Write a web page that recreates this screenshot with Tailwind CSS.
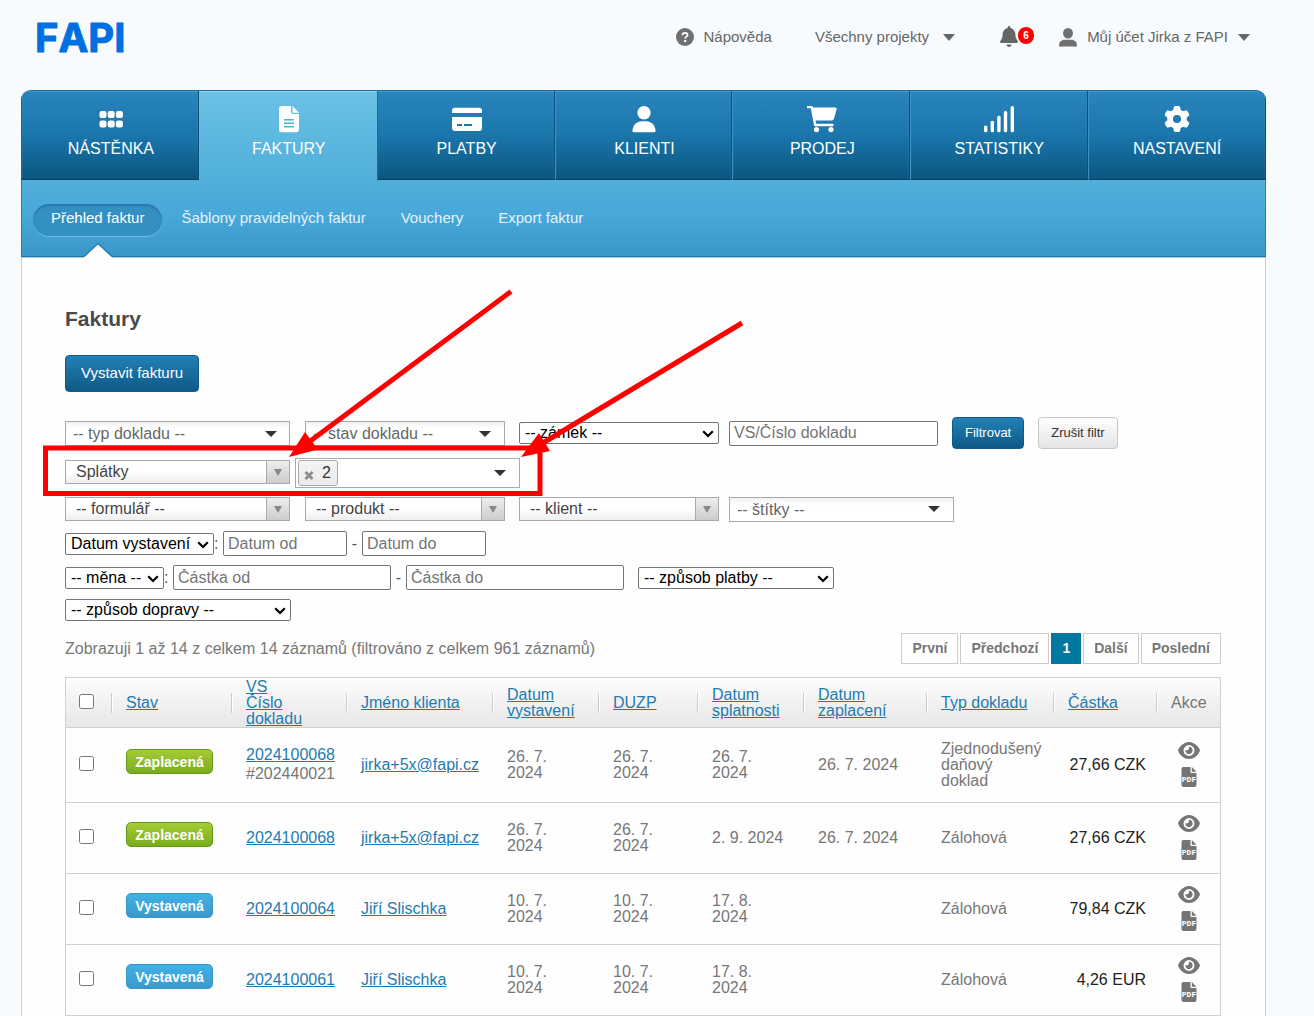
<!DOCTYPE html>
<html lang="cs">
<head>
<meta charset="utf-8">
<meta name="viewport" content="width=device-width, initial-scale=1">
<title>FAPI – Faktury</title>
<script src="https://cdn.jsdelivr.net/npm/@tailwindcss/browser@4"></script>
</head>
<body class="relative bg-[#f8fbfe] font-['Liberation_Sans',Arial,sans-serif] text-base text-[#777]">

<!-- Shared icons -->
<svg class="hidden" aria-hidden="true">
  <symbol id="eye" viewBox="0 32 576 448"><path d="M288 32c-80.800 0-145.500 36.800-192.600 80.600C48.600 156 17.300 208 2.500 243.700c-3.300 7.900-3.300 16.700 0 24.600C17.300 304 48.600 356 95.400 399.400C142.500 443.200 207.200 480 288 480s145.500-36.800 192.600-80.600c46.800-43.500 78.100-95.400 93-131.100c3.300-7.900 3.300-16.700 0-24.600c-14.900-35.700-46.200-87.700-93-131.100C433.500 68.800 368.800 32 288 32zM144 256a144 144 0 1 1 288 0 144 144 0 1 1-288 0zm144-64c0 35.300-28.700 64-64 64c-7.100 0-13.900-1.200-20.300-3.300c-5.500-1.800-11.900 1.600-11.700 7.400c.3 6.900 1.300 13.800 3.200 20.700c13.700 51.200 66.400 81.600 117.600 67.900s81.600-66.400 67.900-117.600c-11.100-41.500-47.800-69.400-88.600-71.100c-5.800-.2-9.200 6.100-7.400 11.700c2.100 6.400 3.300 13.200 3.300 20.300z"/></symbol>
  <symbol id="pdf" viewBox="0 0 16 20"><path d="M2 0H9.500V5a1 1 0 0 0 1 1H15.500V18a2 2 0 0 1-2 2H2.500a2 2 0 0 1-2-2V2a2 2 0 0 1 1.500-2zM10.800 0L15.500 4.700H10.800z"/><text x="8" y="14.500" text-anchor="middle" font-family="Liberation Mono" font-weight="bold" font-size="8" fill="#fff">PDF</text></symbol>
  <symbol id="caret" viewBox="0 0 12 6"><path d="M0 0H12L6 6z"/></symbol>
  <symbol id="dropdown" viewBox="0 0 8 7"><path d="M0 0H8L4 7z"/></symbol>
  <symbol id="chevron" viewBox="0 0 12 8"><path d="M1.200 1.200L6 6L10.800 1.200" fill="none" stroke="#000" stroke-width="2.200"/></symbol>
</svg>

<header class="flex h-[90px] items-start justify-between pl-[35px] pr-16">
  <a href="#" aria-label="FAPI" class="mt-3">
    <svg width="100" height="52" viewBox="0 0 100 52"><text class="[font-kerning:none]" x="0" y="40" font-family="Inter" font-weight="700" font-size="40" fill="#006fe0" stroke="#006fe0" stroke-width="1" stroke-linejoin="round">FAPI</text></svg>
  </a>
  <nav class="mt-[25px] flex h-6 items-center text-[15px] text-[#666]">
    <a href="#" class="flex items-center gap-[10px]">
      <svg width="18" height="18" viewBox="0 0 18 18"><circle cx="9" cy="9" r="9" fill="#707070"/><path d="M6.500 7.200C6.500 5.500 7.600 4.800 9 4.800S11.500 5.700 11.500 7C11.500 8.600 9.200 8.700 9.200 10.500" fill="none" stroke="#fff" stroke-width="1.800"/><circle cx="9.200" cy="13" r="1.200" fill="#fff"/></svg>
      Nápověda</a>
    <button type="button" class="ml-[43px] flex items-center gap-[14px]">Všechny projekty <svg class="mt-px fill-[#666]" width="12" height="7" viewBox="0 0 12 6" preserveAspectRatio="none"><use href="#caret"/></svg></button>
    <button type="button" class="ml-[45px] flex items-start pb-0.5" aria-label="Oznámení">
      <svg class="fill-[#666]" width="18" height="21" viewBox="0 0 448 512" preserveAspectRatio="none"><path d="M224 0c-17.700 0-32 14.300-32 32V51.200C119 66 64 130.600 64 208v18.800c0 47-17.300 92.400-48.500 127.600l-7.400 8.300c-8.400 9.400-10.400 22.900-5.300 34.400S19.400 416 32 416H416c12.600 0 24-7.400 29.200-18.900s3.100-25-5.300-34.400l-7.400-8.300C401.300 319.200 384 273.900 384 226.800V208c0-77.400-55-142-128-156.800V32c0-17.700-14.300-32-32-32zm45.300 493.300c12-12 18.700-28.300 18.700-45.300H224 160c0 17 6.700 33.300 18.700 45.300s28.300 18.700 45.300 18.700s33.300-6.700 45.300-18.700z"/></svg>
      <span class="mt-px flex h-[17px] w-4 items-center justify-center rounded-full bg-[#f00] text-[10px] font-bold text-white">6</span>
    </button>
    <button type="button" class="ml-[25px] flex items-center gap-[10px]">
      <svg class="fill-[#707070]" width="18" height="19" viewBox="0 0 18 19"><ellipse cx="9" cy="5.300" rx="5" ry="5.300"/><path d="M0 17.500C0 14 2.500 11.800 5.500 11.800H12.500C15.500 11.800 18 14 18 17.500V18.500H0z"/></svg>
      Můj účet Jirka z FAPI <svg class="mt-px fill-[#666]" width="12" height="7" viewBox="0 0 12 6" preserveAspectRatio="none"><use href="#caret"/></svg></button>
  </nav>
</header>

<div class="ml-[21px] mr-12">
  <!-- Main navigation -->
  <nav class="grid h-[90px] grid-cols-7 overflow-hidden rounded-t-[10px] border-t border-[#1673a8] bg-[#1a75aa] text-white">
    <a href="#" class="flex flex-col items-center border-b border-l border-r border-b-[#053f5e] border-l-[#146a9c] border-r-[#0b507a] bg-linear-to-b from-[#2985bc] via-[#1b76ac] to-[#0a5680] pl-0.5 pt-[14px] shadow-[inset_0_1px_1px_#4a9bcb]">
      <svg class="fill-white" width="30" height="28" viewBox="0 0 30 28"><rect x="3.500" y="6" width="7" height="7" rx="2"/><rect x="11.700" y="6" width="7" height="7" rx="2"/><rect x="19.900" y="6" width="7" height="7" rx="2"/><rect x="3.500" y="15.500" width="7" height="7" rx="2"/><rect x="11.700" y="15.500" width="7" height="7" rx="2"/><rect x="19.900" y="15.500" width="7" height="7" rx="2"/></svg>
      <span class="mt-1.5 leading-5">NÁSTĚNKA</span></a>
    <a href="#" class="flex flex-col items-center bg-linear-to-b from-[#6bc1e5] to-[#50afda] pl-[3px] pr-px pt-[14px] shadow-[inset_0_1px_1px_#8fd3ef]">
      <svg width="30" height="28" viewBox="0 0 30 28"><path fill="#fff" d="M7.500 1H17V7a2 2 0 0 0 2 2h6V24.500a2.700 2.700 0 0 1-2.700 2.700H7.700A2.700 2.700 0 0 1 5 24.500V3.700A2.700 2.700 0 0 1 7.500 1zM18.500 1L25 7.700H18.500z"/><path d="M10 14.800H20M10 18.300H20M10 21.800H20" stroke="#4fb0da" stroke-width="1.500"/></svg>
      <span class="mt-1.5 leading-5">FAKTURY</span></a>
    <a href="#" class="flex flex-col items-center border-b border-l border-r border-b-[#053f5e] border-l-[#146a9c] border-r-[#0b507a] bg-linear-to-b from-[#2985bc] via-[#1b76ac] to-[#0a5680] pl-0.5 pt-[14px] shadow-[inset_0_1px_1px_#4a9bcb]">
      <svg width="30" height="28" viewBox="0 0 30 28"><path fill="#fff" d="M3 2.700H27a3 3 0 0 1 3 3V8H0V5.700a3 3 0 0 1 3-3zM0 12H30V23a3 3 0 0 1-3 3H3a3 3 0 0 1-3-3z"/><path d="M5 20H10M12 20H20" stroke="#1c77ad" stroke-width="1.800"/></svg>
      <span class="mt-1.5 leading-5">PLATBY</span></a>
    <a href="#" class="flex flex-col items-center border-b border-l border-r border-b-[#053f5e] border-l-[#3f8fc0] border-r-[#0b507a] bg-linear-to-b from-[#2985bc] via-[#1b76ac] to-[#0a5680] pl-0.5 pt-[14px] shadow-[inset_0_1px_1px_#4a9bcb]">
      <svg class="fill-white" width="30" height="28" viewBox="0 0 30 28"><circle cx="15" cy="7.700" r="6.700"/><path d="M3.500 26C3.500 20 8 16.300 13 16.300H17C22 16.300 26.500 20 26.500 26Q26.500 27.200 25.300 27.200H4.700Q3.500 27.200 3.500 26z"/></svg>
      <span class="mt-1.5 leading-5">KLIENTI</span></a>
    <a href="#" class="flex flex-col items-center border-b border-l border-r border-b-[#053f5e] border-l-[#3f8fc0] border-r-[#0b507a] bg-linear-to-b from-[#2985bc] via-[#1b76ac] to-[#0a5680] pl-0.5 pt-[14px] shadow-[inset_0_1px_1px_#4a9bcb]">
      <svg width="30" height="28" viewBox="0 0 30 28"><path d="M1 2.100H4.800L8.200 20H25.500" fill="none" stroke="#fff" stroke-width="2.400" stroke-linecap="round" stroke-linejoin="round"/><path fill="#fff" d="M5.500 2.500H28.500Q30 2.700 29.600 4.300L27 13.700Q26.500 15.500 24.800 15.500H8z"/><circle cx="9.500" cy="24.600" r="2.600" fill="#fff"/><circle cx="24" cy="24.600" r="2.600" fill="#fff"/></svg>
      <span class="mt-1.5 leading-5">PRODEJ</span></a>
    <a href="#" class="flex flex-col items-center border-b border-l border-r border-b-[#053f5e] border-l-[#3f8fc0] border-r-[#0b507a] bg-linear-to-b from-[#2985bc] via-[#1b76ac] to-[#0a5680] pt-[14px] shadow-[inset_0_1px_1px_#4a9bcb]">
      <svg class="fill-white" width="30" height="28" viewBox="0 0 30 28"><rect x="0" y="20.500" width="3.400" height="6.700" rx="1.500"/><rect x="6.600" y="15.800" width="3.400" height="11.400" rx="1.500"/><rect x="13.200" y="10.800" width="3.400" height="16.400" rx="1.500"/><rect x="19.800" y="6" width="3.400" height="21.200" rx="1.500"/><rect x="26.600" y="1" width="3.400" height="26.200" rx="1.500"/></svg>
      <span class="mt-1.5 leading-5">STATISTIKY</span></a>
    <a href="#" class="flex flex-col items-center border-b border-l border-r border-b-[#053f5e] border-l-[#3f8fc0] border-r-[#0b507a] bg-linear-to-b from-[#2985bc] via-[#1b76ac] to-[#0a5680] pt-[14px] shadow-[inset_0_1px_1px_#4a9bcb]">
      <svg class="fill-white" width="26" height="28" viewBox="0 -20 512 552"><path d="M495.900 166.600c3.200 8.700 .5 18.400-6.400 24.600l-43.300 39.400c1.100 8.300 1.700 16.800 1.700 25.400s-.6 17.100-1.700 25.400l43.300 39.400c6.900 6.200 9.600 15.900 6.400 24.600c-4.400 11.900-9.700 23.300-15.800 34.300l-4.700 8.100c-6.600 11-14 21.400-22.100 31.200c-5.900 7.200-15.700 9.600-24.500 6.800l-55.700-17.700c-13.400 10.300-28.200 18.900-44 25.400l-12.500 57.100c-2 9.100-9 16.300-18.200 17.800c-13.800 2.300-28 3.500-42.500 3.500s-28.700-1.200-42.500-3.500c-9.200-1.500-16.200-8.700-18.200-17.800l-12.500-57.100c-15.800-6.500-30.600-15.100-44-25.400L83.100 425.900c-8.800 2.800-18.600 .3-24.500-6.800c-8.100-9.800-15.500-20.200-22.100-31.200l-4.700-8.100c-6.100-11-11.400-22.400-15.800-34.300c-3.200-8.700-.5-18.400 6.400-24.600l43.300-39.400C64.600 273.100 64 264.600 64 256s.6-17.100 1.700-25.400L22.400 191.200c-6.900-6.200-9.600-15.900-6.400-24.600c4.400-11.900 9.700-23.300 15.800-34.300l4.700-8.100c6.600-11 14-21.400 22.100-31.200c5.900-7.200 15.700-9.600 24.500-6.800l55.700 17.700c13.400-10.300 28.200-18.900 44-25.400l12.500-57.100c2-9.100 9-16.300 18.200-17.800C227.300 1.200 241.500 0 256 0s28.700 1.200 42.500 3.500c9.200 1.500 16.200 8.700 18.200 17.800l12.500 57.100c15.800 6.500 30.600 15.100 44 25.400l55.700-17.700c8.800-2.800 18.600-.3 24.500 6.800c8.100 9.800 15.500 20.200 22.100 31.200l4.700 8.100c6.100 11 11.400 22.400 15.800 34.300zM256 336a80 80 0 1 0 0-160 80 80 0 1 0 0 160z"/></svg>
      <span class="mt-1.5 leading-5">NASTAVENÍ</span></a>
  </nav>

  <!-- Section navigation -->
  <nav class="relative h-[77px] border-x border-b border-x-[#2180b5] border-b-[#1f78a9] bg-linear-to-b from-[#50afda] via-[#47a7d9] to-[#3b96ca] px-[11px] pt-6 text-[15px] text-[#e4f3fb]">
    <div class="flex items-center gap-[35px]">
      <a href="#" class="-mr-4 flex h-8 items-center rounded-full bg-[#348fc3] px-[18px] pb-[3px] text-white shadow-[inset_0_2px_2px_#2a79aa,0_1px_0_#72bde3]">Přehled faktur</a>
      <a href="#" class="pb-[3px]">Šablony pravidelných faktur</a>
      <a href="#" class="pb-[3px]">Vouchery</a>
      <a href="#" class="pb-[3px]">Export faktur</a>
    </div>
    <svg class="absolute -bottom-0.5 left-[60px]" width="32" height="16" viewBox="0 0 32 16"><path d="M1 16L16 1.500L31 16z" fill="#fff"/><path d="M2 14.500L16 1.500L30 14.500" fill="none" stroke="#2a7fae" stroke-width="1.500"/></svg>
  </nav>

  <main class="border-x border-t border-[#ccc] border-t-[#a9c8d9] bg-[#fefefe] pl-[43px] pr-11 pt-[49px]">
    <h1 class="text-[21px] font-bold leading-6 text-[#4a4a4a]">Faktury</h1>
    <button type="button" class="mt-6 block h-[37px] rounded-[4px] border border-[#0d5d8c] bg-linear-to-b from-[#2480b6] to-[#0d5a86] px-[15px] text-[15px] text-white">Vystavit fakturu</button>

    <form class="mt-[25px] flex flex-col gap-[9px] text-[#555]">
      <div class="flex h-8 items-center">
        <div class="relative w-[225px]">
          <select aria-label="Typ dokladu" class="block h-[25px] w-full appearance-none border border-[#aaa] bg-white bg-linear-to-b from-[#f2f2f2] to-white to-30% pl-[7px] text-[#666]"><option>-- typ dokladu --</option></select>
          <svg class="pointer-events-none absolute right-[13px] top-[10px] fill-[#333]" width="12" height="6"><use href="#caret"/></svg>
        </div>
        <div class="relative ml-[15px] w-[200px]">
          <select aria-label="Stav dokladu" class="block h-[25px] w-full appearance-none border border-[#aaa] bg-white bg-linear-to-b from-[#f2f2f2] to-white to-30% pl-[7px] text-[#666]"><option>-- stav dokladu --</option></select>
          <svg class="pointer-events-none absolute right-[14px] top-[10px] fill-[#333]" width="12" height="6"><use href="#caret"/></svg>
        </div>
        <div class="relative ml-[14px] w-[200px]">
          <select aria-label="Zámek" class="block h-[22px] w-full appearance-none rounded-[2px] border border-[#767676] bg-white pl-[5px] leading-5 text-black"><option>-- zámek --</option></select>
          <svg class="pointer-events-none absolute right-[5px] top-2" width="12" height="8"><use href="#chevron"/></svg>
        </div>
        <input type="text" aria-label="VS/Číslo dokladu" placeholder="VS/Číslo dokladu" class="ml-[10px] h-[25px] w-[209px] rounded-[2px] border border-[#767676] bg-white px-1 placeholder:text-[#757575]">
        <button type="submit" class="ml-[14px] h-8 rounded-[4px] border border-[#0d5d8c] bg-linear-to-b from-[#2480b6] to-[#0d5a86] px-3 text-[13px] text-white">Filtrovat</button>
        <button type="reset" class="ml-[14px] h-8 rounded-[4px] border border-[#c6c6c6] bg-linear-to-b from-white to-[#e4e4e4] px-3 text-[13px] text-[#333]">Zrušit filtr</button>
      </div>
      <div class="flex h-[30px] items-center">
        <div class="relative mb-0.5 w-[225px]">
          <select aria-label="Splátky" class="block h-6 w-full appearance-none border border-[#aaa] bg-white bg-linear-to-t from-[#eee] to-white to-50% pl-[10px] leading-[22px] text-[#444]"><option>Splátky</option></select>
          <span class="pointer-events-none absolute inset-y-px right-px flex w-[23px] items-center justify-center border-l border-[#aaa] bg-linear-to-b from-[#eee] to-[#ccc]"><svg class="fill-[#888]" width="8" height="7"><use href="#dropdown"/></svg></span>
        </div>
        <div class="ml-[5px] flex h-[30px] w-[225px] items-center border border-[#aaa] bg-white pl-0.5 pr-[13px]">
          <span class="flex h-[26px] items-center gap-2 rounded-[3px] border border-[#aaa] bg-linear-to-b from-[#f4f4f4] to-[#eaeaea] pl-[5px] pr-1.5 text-[#333]">
            <button type="button" aria-label="Odebrat 2" class="mt-1"><svg width="10" height="9" viewBox="0 0 10 9"><path d="M1.500 1L8.500 8M8.500 1L1.500 8" stroke="#8c8c8c" stroke-width="2.800"/></svg></button>2</span>
          <input type="text" aria-label="Počet splátek" class="min-w-0 flex-1 bg-transparent pl-2">
          <svg class="fill-[#333]" width="12" height="6"><use href="#caret"/></svg>
        </div>
      </div>
      <div class="flex h-[25px] items-start">
        <div class="relative w-[225px]">
          <select aria-label="Formulář" class="block h-6 w-full appearance-none border border-[#aaa] bg-white bg-linear-to-t from-[#eee] to-white to-50% pl-[10px] leading-[22px] text-[#444]"><option>-- formulář --</option></select>
          <span class="pointer-events-none absolute inset-y-px right-px flex w-[23px] items-center justify-center border-l border-[#aaa] bg-linear-to-b from-[#eee] to-[#ccc]"><svg class="fill-[#888]" width="8" height="7"><use href="#dropdown"/></svg></span>
        </div>
        <div class="relative ml-[15px] w-[200px]">
          <select aria-label="Produkt" class="block h-6 w-full appearance-none border border-[#aaa] bg-white bg-linear-to-t from-[#eee] to-white to-50% pl-[10px] leading-[22px] text-[#444]"><option>-- produkt --</option></select>
          <span class="pointer-events-none absolute inset-y-px right-px flex w-[23px] items-center justify-center border-l border-[#aaa] bg-linear-to-b from-[#eee] to-[#ccc]"><svg class="fill-[#888]" width="8" height="7"><use href="#dropdown"/></svg></span>
        </div>
        <div class="relative ml-[14px] w-[200px]">
          <select aria-label="Klient" class="block h-6 w-full appearance-none border border-[#aaa] bg-white bg-linear-to-t from-[#eee] to-white to-50% pl-[10px] leading-[22px] text-[#444]"><option>-- klient --</option></select>
          <span class="pointer-events-none absolute inset-y-px right-px flex w-[23px] items-center justify-center border-l border-[#aaa] bg-linear-to-b from-[#eee] to-[#ccc]"><svg class="fill-[#888]" width="8" height="7"><use href="#dropdown"/></svg></span>
        </div>
        <div class="relative ml-[10px] w-[225px]">
          <select aria-label="Štítky" class="block h-[25px] w-full appearance-none border border-[#aaa] bg-white bg-linear-to-b from-[#f2f2f2] to-white to-30% pl-[7px] leading-[22px] text-[#666]"><option>-- štítky --</option></select>
          <svg class="pointer-events-none absolute right-[14px] top-[9px] fill-[#333]" width="12" height="6"><use href="#caret"/></svg>
        </div>
      </div>
      <div class="flex h-[25px] items-center">
        <div class="relative w-[149px]">
          <select aria-label="Typ data" class="block h-[22px] w-full appearance-none rounded-[2px] border border-[#767676] bg-white pl-[5px] leading-5 text-black"><option>Datum vystavení</option></select>
          <svg class="pointer-events-none absolute right-[5px] top-2" width="12" height="8"><use href="#chevron"/></svg>
        </div>
        <span class="w-[9px]">:</span>
        <input type="text" aria-label="Datum od" placeholder="Datum od" class="h-[25px] w-[124px] rounded-[2px] border border-[#767676] bg-white px-1 placeholder:text-[#757575]">
        <span class="w-[15px] text-center">-</span>
        <input type="text" aria-label="Datum do" placeholder="Datum do" class="h-[25px] w-[124px] rounded-[2px] border border-[#767676] bg-white px-1 placeholder:text-[#757575]">
      </div>
      <div class="flex h-[25px] items-center">
        <div class="relative w-[99px]">
          <select aria-label="Měna" class="block h-[22px] w-full appearance-none rounded-[2px] border border-[#767676] bg-white pl-[5px] leading-5 text-black"><option>-- měna --</option></select>
          <svg class="pointer-events-none absolute right-[5px] top-2" width="12" height="8"><use href="#chevron"/></svg>
        </div>
        <span class="w-[9px]">:</span>
        <input type="text" aria-label="Částka od" placeholder="Částka od" class="h-[25px] w-[218px] rounded-[2px] border border-[#767676] bg-white px-1 placeholder:text-[#757575]">
        <span class="w-[15px] text-center">-</span>
        <input type="text" aria-label="Částka do" placeholder="Částka do" class="h-[25px] w-[218px] rounded-[2px] border border-[#767676] bg-white px-1 placeholder:text-[#757575]">
        <div class="relative ml-[14px] w-[196px]">
          <select aria-label="Způsob platby" class="block h-[22px] w-full appearance-none rounded-[2px] border border-[#767676] bg-white pl-[5px] leading-5 text-black"><option>-- způsob platby --</option></select>
          <svg class="pointer-events-none absolute right-[5px] top-2" width="12" height="8"><use href="#chevron"/></svg>
        </div>
      </div>
      <div class="relative w-[226px]">
        <select aria-label="Způsob dopravy" class="block h-[22px] w-full appearance-none rounded-[2px] border border-[#767676] bg-white pl-[5px] leading-5 text-black"><option>-- způsob dopravy --</option></select>
        <svg class="pointer-events-none absolute right-[5px] top-2" width="12" height="8"><use href="#chevron"/></svg>
      </div>
    </form>

    <div class="mt-3 flex h-[31px] items-center justify-between">
      <p>Zobrazuji 1 až 14 z celkem 14 záznamů (filtrováno z celkem 961 záznamů)</p>
      <nav class="flex gap-0.5 text-[14px] font-bold" aria-label="Stránkování">
        <a href="#" class="flex h-[31px] items-center border border-[#ccc] bg-white px-[10px]">První</a>
        <a href="#" class="flex h-[31px] items-center border border-[#ccc] bg-white px-[10px]">Předchozí</a>
        <a href="#" aria-current="page" class="flex h-[31px] items-center border border-[#00789f] bg-[#00789f] px-[10px] text-white">1</a>
        <a href="#" class="flex h-[31px] items-center border border-[#ccc] bg-white px-[10px]">Další</a>
        <a href="#" class="flex h-[31px] items-center border border-[#ccc] bg-white px-[10px]">Poslední</a>
      </nav>
    </div>

    <table class="mt-[13px] w-full table-fixed border-separate border-spacing-0 border-x border-t border-[#d0d0d0] leading-4 [&_td]:border-b [&_td]:border-[#d0d0d0] [&_td]:pl-[15px] [&_th]:border-b [&_th]:border-[#d0d0d0] [&_th]:text-left [&_th]:font-normal [&_th_a]:text-[#1e7cb0] [&_th_a]:underline">
      <colgroup>
        <col class="w-[45px]"><col class="w-[120px]"><col class="w-[115px]"><col class="w-[146px]"><col class="w-[106px]"><col class="w-[99px]"><col class="w-[106px]"><col class="w-[123px]"><col class="w-[127px]"><col class="w-[103px]"><col class="w-[64px]">
      </colgroup>
      <thead>
        <tr class="h-[50px] bg-linear-to-b from-[#fdfdfd] to-[#e6e6e6]">
          <th class="pb-[3px]"><input type="checkbox" aria-label="Vybrat vše" class="ml-[13px] block size-[15px]"></th>
          <th><div class="flex items-center gap-[14px]"><span class="h-5 w-px bg-[#ccc] shadow-[1px_0_#fff]"></span><a href="#">Stav</a></div></th>
          <th><div class="flex items-center gap-[14px]"><span class="h-5 w-px bg-[#ccc] shadow-[1px_0_#fff]"></span><a href="#">VS<br>Číslo<br>dokladu</a></div></th>
          <th><div class="flex items-center gap-[14px]"><span class="h-5 w-px bg-[#ccc] shadow-[1px_0_#fff]"></span><a href="#">Jméno klienta</a></div></th>
          <th><div class="flex items-center gap-[14px]"><span class="h-5 w-px bg-[#ccc] shadow-[1px_0_#fff]"></span><a href="#">Datum<br>vystavení</a></div></th>
          <th><div class="flex items-center gap-[14px]"><span class="h-5 w-px bg-[#ccc] shadow-[1px_0_#fff]"></span><a href="#">DUZP</a></div></th>
          <th><div class="flex items-center gap-[14px]"><span class="h-5 w-px bg-[#ccc] shadow-[1px_0_#fff]"></span><a href="#">Datum<br>splatnosti</a></div></th>
          <th><div class="flex items-center gap-[14px]"><span class="h-5 w-px bg-[#ccc] shadow-[1px_0_#fff]"></span><a href="#">Datum<br>zaplacení</a></div></th>
          <th><div class="flex items-center gap-[14px]"><span class="h-5 w-px bg-[#ccc] shadow-[1px_0_#fff]"></span><a href="#">Typ dokladu</a></div></th>
          <th><div class="flex items-center gap-[14px]"><span class="h-5 w-px bg-[#ccc] shadow-[1px_0_#fff]"></span><a href="#">Částka</a></div></th>
          <th><div class="flex items-center gap-[14px]"><span class="h-5 w-px bg-[#ccc] shadow-[1px_0_#fff]"></span>Akce</div></th>
        </tr>
      </thead>
      <tbody>
        <tr class="h-[75px]">
          <td class="pb-1"><input type="checkbox" aria-label="Vybrat 2024100068" class="-ml-0.5 block size-[15px]"></td>
          <td class="pb-[7px]"><span class="flex h-[25px] w-[87px] items-center justify-center rounded-[5px] border border-[#5f9a1c] bg-linear-to-b from-[#a5cb35] to-[#7aac1c] text-[14px] font-bold text-white">Zaplacená</span></td>
          <td class="pb-0.5 leading-[19px]"><a href="#" class="text-[#1e7cb0] underline">2024100068</a><br>#202440021</td>
          <td><a href="#" class="text-[#1e7cb0] underline">jirka+5x@fapi.cz</a></td>
          <td>26. 7.<br>2024</td>
          <td>26. 7.<br>2024</td>
          <td>26. 7.<br>2024</td>
          <td>26. 7. 2024</td>
          <td>Zjednodušený<br>daňový<br>doklad</td>
          <td class="pr-[10px] text-right text-[#222]">27,66 CZK</td>
          <td class="pb-0.5"><div class="flex w-9 flex-col items-center gap-2"><a href="#" aria-label="Zobrazit"><svg class="fill-[#757575]" width="22" height="17"><use href="#eye"/></svg></a><a href="#" aria-label="PDF"><svg class="fill-[#757575]" width="16" height="20"><use href="#pdf"/></svg></a></div></td>
        </tr>
        <tr class="h-[71px]">
          <td class="pb-1"><input type="checkbox" aria-label="Vybrat 2024100068" class="-ml-0.5 block size-[15px]"></td>
          <td class="pb-[7px]"><span class="flex h-[25px] w-[87px] items-center justify-center rounded-[5px] border border-[#5f9a1c] bg-linear-to-b from-[#a5cb35] to-[#7aac1c] text-[14px] font-bold text-white">Zaplacená</span></td>
          <td><a href="#" class="text-[#1e7cb0] underline">2024100068</a></td>
          <td><a href="#" class="text-[#1e7cb0] underline">jirka+5x@fapi.cz</a></td>
          <td>26. 7.<br>2024</td>
          <td>26. 7.<br>2024</td>
          <td>2. 9. 2024</td>
          <td>26. 7. 2024</td>
          <td>Zálohová</td>
          <td class="pr-[10px] text-right text-[#222]">27,66 CZK</td>
          <td class="pb-0.5"><div class="flex w-9 flex-col items-center gap-2"><a href="#" aria-label="Zobrazit"><svg class="fill-[#757575]" width="22" height="17"><use href="#eye"/></svg></a><a href="#" aria-label="PDF"><svg class="fill-[#757575]" width="16" height="20"><use href="#pdf"/></svg></a></div></td>
        </tr>
        <tr class="h-[71px]">
          <td class="pb-1"><input type="checkbox" aria-label="Vybrat 2024100064" class="-ml-0.5 block size-[15px]"></td>
          <td class="pb-[7px]"><span class="flex h-[25px] w-[87px] items-center justify-center rounded-[5px] border border-[#3a93c6] bg-linear-to-b from-[#3fb2e6] to-[#3c98cc] text-[14px] font-bold text-white">Vystavená</span></td>
          <td><a href="#" class="text-[#1e7cb0] underline">2024100064</a></td>
          <td><a href="#" class="text-[#1e7cb0] underline">Jiří Slischka</a></td>
          <td>10. 7.<br>2024</td>
          <td>10. 7.<br>2024</td>
          <td>17. 8.<br>2024</td>
          <td></td>
          <td>Zálohová</td>
          <td class="pr-[10px] text-right text-[#222]">79,84 CZK</td>
          <td class="pb-0.5"><div class="flex w-9 flex-col items-center gap-2"><a href="#" aria-label="Zobrazit"><svg class="fill-[#757575]" width="22" height="17"><use href="#eye"/></svg></a><a href="#" aria-label="PDF"><svg class="fill-[#757575]" width="16" height="20"><use href="#pdf"/></svg></a></div></td>
        </tr>
        <tr class="h-[71px]">
          <td class="pb-1"><input type="checkbox" aria-label="Vybrat 2024100061" class="-ml-0.5 block size-[15px]"></td>
          <td class="pb-[7px]"><span class="flex h-[25px] w-[87px] items-center justify-center rounded-[5px] border border-[#3a93c6] bg-linear-to-b from-[#3fb2e6] to-[#3c98cc] text-[14px] font-bold text-white">Vystavená</span></td>
          <td><a href="#" class="text-[#1e7cb0] underline">2024100061</a></td>
          <td><a href="#" class="text-[#1e7cb0] underline">Jiří Slischka</a></td>
          <td>10. 7.<br>2024</td>
          <td>10. 7.<br>2024</td>
          <td>17. 8.<br>2024</td>
          <td></td>
          <td>Zálohová</td>
          <td class="pr-[10px] text-right text-[#222]">4,26 EUR</td>
          <td class="pb-0.5"><div class="flex w-9 flex-col items-center gap-2"><a href="#" aria-label="Zobrazit"><svg class="fill-[#757575]" width="22" height="17"><use href="#eye"/></svg></a><a href="#" aria-label="PDF"><svg class="fill-[#757575]" width="16" height="20"><use href="#pdf"/></svg></a></div></td>
        </tr>
      </tbody>
    </table>
  </main>
</div>

<!-- Red callout around the instalment filter -->
<svg class="pointer-events-none absolute left-10 top-[280px]" width="720" height="220" viewBox="40 280 720 220" fill="none" stroke="#f00" stroke-width="5" aria-hidden="true">
  <rect x="45.500" y="448" width="494.500" height="45.500"/>
  <path d="M511 291.500L309 442M742 323L542 443.500"/>
  <path d="M289 457L305 432L318 449.500zM521 457L539 433L550 451z" fill="#f00" stroke="none"/>
</svg>
</body>
</html>
